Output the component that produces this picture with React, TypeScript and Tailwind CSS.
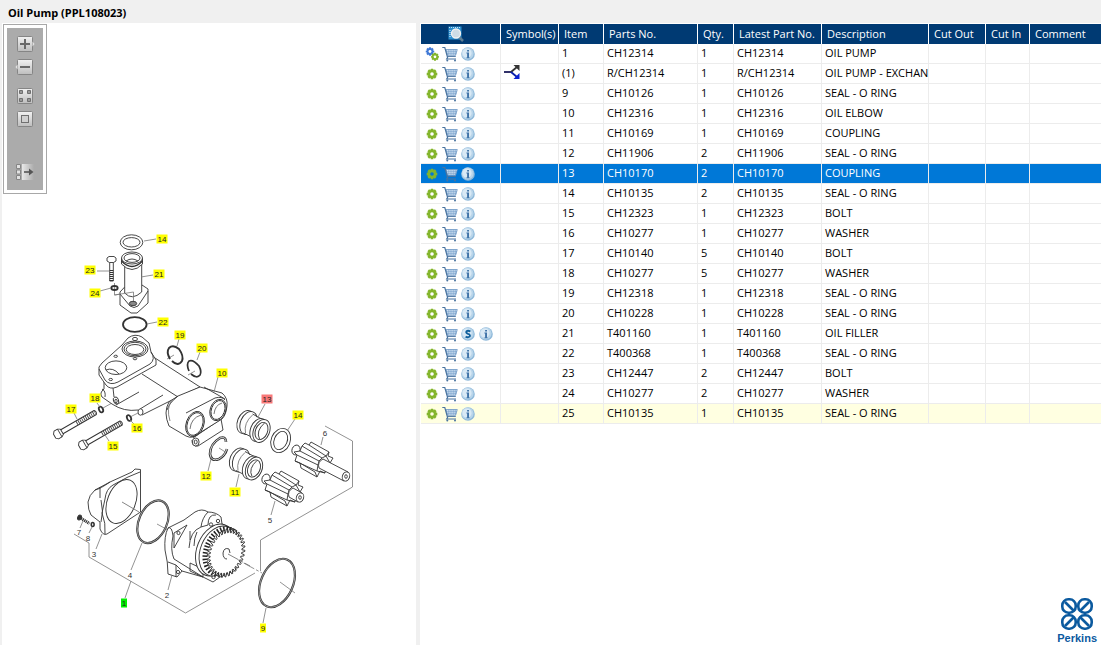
import { ReactNode, useState } from "react";

type Part = {
  item: string;
  no: string;
  qty: number;
  desc: string;
  assembly?: boolean;
  exchange?: boolean;
  service?: boolean;
};

const parts: Part[] = [
  { item: "1", no: "CH12314", qty: 1, desc: "OIL PUMP", assembly: true },
  { item: "(1)", no: "R/CH12314", qty: 1, desc: "OIL PUMP - EXCHAN", exchange: true },
  { item: "9", no: "CH10126", qty: 1, desc: "SEAL - O RING" },
  { item: "10", no: "CH12316", qty: 1, desc: "OIL ELBOW" },
  { item: "11", no: "CH10169", qty: 1, desc: "COUPLING" },
  { item: "12", no: "CH11906", qty: 2, desc: "SEAL - O RING" },
  { item: "13", no: "CH10170", qty: 2, desc: "COUPLING" },
  { item: "14", no: "CH10135", qty: 2, desc: "SEAL - O RING" },
  { item: "15", no: "CH12323", qty: 1, desc: "BOLT" },
  { item: "16", no: "CH10277", qty: 1, desc: "WASHER" },
  { item: "17", no: "CH10140", qty: 5, desc: "BOLT" },
  { item: "18", no: "CH10277", qty: 5, desc: "WASHER" },
  { item: "19", no: "CH12318", qty: 1, desc: "SEAL - O RING" },
  { item: "20", no: "CH10228", qty: 1, desc: "SEAL - O RING" },
  { item: "21", no: "T401160", qty: 1, desc: "OIL FILLER", service: true },
  { item: "22", no: "T400368", qty: 1, desc: "SEAL - O RING" },
  { item: "23", no: "CH12447", qty: 2, desc: "BOLT" },
  { item: "24", no: "CH10277", qty: 2, desc: "WASHER" },
  { item: "25", no: "CH10135", qty: 1, desc: "SEAL - O RING" },
];

const callouts: { n: string; x: number; y: number }[] = [
  { n: "14", x: 162, y: 239 },
  { n: "23", x: 90, y: 270 },
  { n: "21", x: 159, y: 274 },
  { n: "24", x: 95, y: 293 },
  { n: "22", x: 163, y: 322 },
  { n: "19", x: 180, y: 335 },
  { n: "20", x: 202, y: 348 },
  { n: "10", x: 222, y: 373 },
  { n: "18", x: 95, y: 398 },
  { n: "17", x: 71, y: 409 },
  { n: "16", x: 137, y: 428 },
  { n: "15", x: 113, y: 446 },
  { n: "13", x: 267, y: 399 },
  { n: "14", x: 298, y: 415 },
  { n: "12", x: 206, y: 476 },
  { n: "11", x: 235, y: 492 },
  { n: "9", x: 263, y: 628 },
  { n: "1", x: 124, y: 603 },
];

const plainLabels = [
  { n: "6", x: 325, y: 433 },
  { n: "5", x: 270, y: 520 },
  { n: "7", x: 79, y: 532 },
  { n: "8", x: 88, y: 538 },
  { n: "3", x: 94, y: 554 },
  { n: "4", x: 130, y: 575 },
  { n: "2", x: 167, y: 595 },
];

const columns = [
  { label: "Symbol(s)", width: "w-[58px]" },
  { label: "Item", width: "w-[45px]" },
  { label: "Parts No.", width: "w-[94px]" },
  { label: "Qty.", width: "w-[36px]" },
  { label: "Latest Part No.", width: "w-[88px]" },
  { label: "Description", width: "w-[107px]" },
  { label: "Cut Out", width: "w-[57px]" },
  { label: "Cut In", width: "w-[44px]" },
  { label: "Comment", width: "w-auto" },
];

function Cog({ x, y, color, hole, scale = 1 }: { x: number; y: number; color: string; hole: string; scale?: number }) {
  return (
    <g transform={`translate(${x} ${y}) scale(${scale})`}>
      {[0, 45, 90, 135].map((a) => (
        <rect key={a} x="-1.4" y="-5.3" width="2.8" height="10.6" rx="0.5" fill={color} transform={`rotate(${a})`} />
      ))}
      <circle r="4" fill={color} />
      <circle r="1.8" fill={hole} />
    </g>
  );
}

function PartIcon({ assembly, hole }: { assembly?: boolean; hole: string }) {
  return (
    <svg viewBox="0 0 16 16" className="h-4 w-4">
      {assembly ? (
        <>
          <Cog x={6} y={5.5} color="#4079d6" hole={hole} scale={0.8} />
          <Cog x={11} y={10.8} color="#84b52c" hole={hole} scale={0.75} />
        </>
      ) : (
        <Cog x={8} y={8} color="#84b52c" hole={hole} />
      )}
    </svg>
  );
}

function CartIcon() {
  return (
    <svg viewBox="0 0 16 16" className="h-4 w-4" fill="none" stroke="#49739f">
      <path d="M4 3.5H15.3L13.6 9.3H5.5Z" fill="#d9e8f6" stroke="#6f97c4" strokeWidth="0.8" />
      <path d="M4.5 5.3H15M5 7.3H14.4M6.8 3.5V9.3M9 3.5V9.3M11.2 3.5V9.3M13.2 3.5V9.3" stroke="#6d97c6" strokeWidth="0.6" />
      <path d="M0.3 1.5H2.8L5.6 11.5L4.7 13H14" strokeWidth="1.2" />
      <path d="M5.4 10.5H13.8" strokeWidth="0.9" />
      <circle cx="5.3" cy="14.4" r="1" fill="#49739f" stroke="none" />
      <circle cx="13" cy="14.4" r="1" fill="#49739f" stroke="none" />
    </svg>
  );
}

function Disc({ children }: { children: ReactNode }) {
  return (
    <svg viewBox="0 0 14 14" className="h-[14px] w-[14px]">
      <circle cx="7" cy="7" r="6.8" fill="#8fb9da" />
      <circle cx="6.6" cy="6.6" r="6" fill="#b9d5ea" />
      <circle cx="6" cy="6" r="4.6" fill="#d9e9f5" />
      {children}
    </svg>
  );
}

function RowActions({ part, hole }: { part: Part; hole: string }) {
  return (
    <div className="flex h-[19px] items-center gap-[2px] pl-[3px]">
      <button aria-label="Part details">
        <PartIcon assembly={part.assembly} hole={hole} />
      </button>
      <button aria-label="Add to cart">
        <CartIcon />
      </button>
      <div className="flex gap-1 pl-px">
        {part.service && (
          <button aria-label="Service">
            <Disc>
              <path d="M9.4 4.6Q7 3 5.4 4.4Q4.6 6 7 6.9Q9.6 7.8 8.8 9.4Q7 11 4.6 9.6" fill="none" stroke="#0f5f9c" strokeWidth="1.8" />
            </Disc>
          </button>
        )}
        <button aria-label="Information">
          <Disc>
            <path d="M6.1 2.9H8V4.5H6.1ZM5.4 5.6H8V10.4H8.7V11.2H5.4V10.4H6.1V6.4H5.4Z" fill="#3f73a8" />
          </Disc>
        </button>
      </div>
    </div>
  );
}

function ToolButton({ label, children }: { label: string; children: ReactNode }) {
  return (
    <button aria-label={label} className="h-4 w-5">
      <svg viewBox="0 0 20 16" className="h-4 w-5">
        <defs>
          <linearGradient id="face" x1="0" y1="0" x2="0" y2="1">
            <stop offset="0" stopColor="#f2f2f2" />
            <stop offset="1" stopColor="#bdbdbd" />
          </linearGradient>
          <linearGradient id="fade" x1="0" y1="0" x2="1" y2="0">
            <stop offset="0" stopColor="#e8e8e8" />
            <stop offset="1" stopColor="#ababab" />
          </linearGradient>
        </defs>
        {children}
      </svg>
    </button>
  );
}

const Face = () => <rect x="2.5" y="0.5" width="15" height="15" rx="1" fill="url(#face)" stroke="#858585" />;

function Toolbar() {
  return (
    <div className="mt-px ml-px w-11 border border-[#a8a8a8] bg-white p-[3px]">
      <div className="flex h-[162px] flex-col items-center bg-[#ababab] pt-2">
        <ToolButton label="Zoom in">
          <Face />
          <path d="M17.5 5.5L19.5 8L17.5 10.5Z" fill="#e4e4e4" />
          <path d="M10 3V13M5 8H15" stroke="#6a6a6a" strokeWidth="2" />
        </ToolButton>
        <div className="h-[7px]" />
        <ToolButton label="Zoom out">
          <Face />
          <path d="M2.5 5.5L0.5 8L2.5 10.5Z" fill="#e4e4e4" />
          <path d="M5 8H15" stroke="#6a6a6a" strokeWidth="2" />
        </ToolButton>
        <div className="h-[13px]" />
        <ToolButton label="Fit to window">
          <Face />
          <path d="M4.5 2.5h3v3h-3zM12.5 2.5h3v3h-3zM4.5 10.5h3v3h-3zM12.5 10.5h3v3h-3z" fill="#999" stroke="#6f6f6f" />
        </ToolButton>
        <div className="h-[7px]" />
        <ToolButton label="Actual size">
          <Face />
          <rect x="6.5" y="4.5" width="7" height="7" fill="#d0d0d0" stroke="#707070" />
        </ToolButton>
        <div className="h-[37px]" />
        <ToolButton label="Hide list">
          <rect x="7" y="0" width="12" height="16" fill="url(#fade)" />
          <path d="M1.5 0.5h4v4h-4zM1.5 6h4v4h-4zM1.5 11.5h4v4h-4z" fill="#e2e2e2" stroke="#858585" />
          <path d="M9 8H16" stroke="#555" strokeWidth="1.6" />
          <path d="M14 4.5L18.5 8L14 11.5Z" fill="#555" />
        </ToolButton>
      </div>
    </div>
  );
}

// drive gear: teeth are spread round a tilted ellipse
function gearOutline() {
  const pts: string[] = [];
  const count = 34;
  const tilt = (20 * Math.PI) / 180;
  for (let i = 0; i < count * 4; i++) {
    const a = (i / (count * 4)) * Math.PI * 2;
    const r = i % 4 < 2 ? 1 : 0.84;
    const px = Math.cos(a) * 18 * r;
    const py = Math.sin(a) * 25 * r;
    const x = 226 + px * Math.cos(tilt) - py * Math.sin(tilt);
    const y = 553 + px * Math.sin(tilt) + py * Math.cos(tilt);
    pts.push(`${x.toFixed(1)} ${y.toFixed(1)}`);
  }
  return "M" + pts.join("L") + "Z";
}

function Ring({ x, y, rx, ry, tilt = 0, gap = 2 }: { x: number; y: number; rx: number; ry: number; tilt?: number; gap?: number }) {
  return (
    <g transform={`translate(${x} ${y}) rotate(${tilt})`}>
      <ellipse rx={rx} ry={ry} />
      <ellipse rx={rx - gap} ry={ry - gap} />
    </g>
  );
}

function Bolt({ x, y, length }: { x: number; y: number; length: number }) {
  return (
    <g transform={`translate(${x} ${y}) rotate(-30)`}>
      <path d={`M4 -2.3H${length}Q${length + 2} 0 ${length} 2.3H4`} fill="#fff" />
      <path d={`M${length * 0.5} 0H${length}`} strokeWidth="4" strokeDasharray="0.9 1.2" stroke="#444" />
      <path d="M-4 -2L-2 -4.5H2L4.5 -3V3L2 4.5H-2L-4 2.5Z" fill="#fff" />
      <path d="M2 -4.5V4.5" />
    </g>
  );
}

function Spool({ x, y }: { x: number; y: number }) {
  return (
    <g transform={`translate(${x} ${y})`} fill="#fff">
      <ellipse cx="-16" cy="-9" rx="8" ry="12" transform="rotate(22 -16 -9)" />
      <ellipse cx="-13" cy="-8" rx="8" ry="12" transform="rotate(22 -13 -8)" />
      <path d="M-10 -17L3 -9L-4 11L-17 2Z" stroke="none" />
      <path d="M-9 -17L2 -11M-18 2L-6 8" />
      <path d="M-9 -16Q-18 -8 -16 2" fill="none" stroke="#777" />
      <ellipse cx="-3" cy="-1" rx="8" ry="12" transform="rotate(22 -3 -1)" />
      <ellipse rx="8" ry="12" transform="rotate(22)" />
      <ellipse rx="6" ry="9" transform="rotate(22)" />
      <path d="M3 -8Q-6 0 -2 8" fill="none" />
    </g>
  );
}

function Pinion({ x, y, shaft }: { x: number; y: number; shaft: number }) {
  return (
    <g transform={`translate(${x} ${y})`} fill="#fff">
      <ellipse cx="-16" cy="-10" rx="4" ry="5" transform="rotate(20 -16 -10)" />
      <path d="M-10 -14L-7 -17L-3 -15L-1 -18L17 -8L16 -4L21 -2L18 3L20 7L14 7L13 13L8 11L5 17L-11 8L-12 3L-17 1L-15 -5L-18 -8L-12 -9Z" />
      <path d="M-3 -15L14 -4L17 -8M-10 -14L10 -2L14 -4M-12 -9L7 1L10 -2M-15 -5L6 5L7 1M-17 1L5 11L6 5M-12 3L3 12L5 17M14 -4L18 3M5 11L13 13" fill="none" />
      <path d={`M11 -1L${12 + shaft} ${shaft / 2}L${8 + shaft} ${9 + shaft / 2}L7 8Q5 2 11 -1Z`} />
      <ellipse cx={10 + shaft} cy={4.5 + shaft / 2} rx="3.6" ry="4.7" transform={`rotate(22 ${10 + shaft} ${4.5 + shaft / 2})`} />
      <ellipse cx={10 + shaft} cy={4.5 + shaft / 2} rx="1.3" ry="1.8" />
    </g>
  );
}

function Diagram({ active }: { active: string }) {
  return (
    <svg viewBox="2 194 414 451" className="block w-full" role="img" aria-label="Exploded view of the oil pump">
      <g fill="none" stroke="#333" strokeWidth="0.9" strokeLinejoin="round">
        {/* frame of the pump assembly and centre lines */}
        <g stroke="#777" strokeWidth="0.8">
          <path d="M325 426L352.5 441V487L260.5 540V571M255 573L185.5 613L89 557V543L74 534" />
          <path d="M280 582L295 593M157 524L168 530M219 448L227 453M167 359L174 355M188 375L195 371M103 408L112 403M130 417L138 413" />
          <path d="M227 554L262 573" strokeDasharray="12 2 3 2" />
          <path d="M114.5 283V295L133.5 292V302" />
        </g>

        {/* filler tube */}
        <Ring x={131.5} y={242.3} rx={11.3} ry={7.5} gap={2.8} />
        <path d="M124.7 287L120 292V305L131 313H137L148 303V289L142 285" fill="#fff" />
        <path d="M120 294L130 306Q134 309 138 306L148 291" />
        <path d="M124.7 264V293Q132 301 141.7 292V264" fill="#fff" />
        <path d="M121.5 258V264Q132 275 142.5 264V258" fill="#fff" />
        <path d="M121.5 261Q132 272 142.5 261" strokeWidth="1.4" />
        <ellipse cx="132" cy="258" rx="10.5" ry="6" fill="#fff" />
        <ellipse cx="132" cy="258" rx="8" ry="4.4" />
        <path d="M126 261Q132 257 138 261" />
        <path d="M114.5 295L133.5 292V302" stroke="#777" strokeWidth="0.8" />
        <ellipse cx="133" cy="303.5" rx="3.7" ry="2.2" fill="#888" />
        <path d="M107 258L109 256.5H114L116 258V261L113.5 262.5H109.5L107 261ZM109.7 262.5V281H113.3V262.5" fill="#fff" />
        <path d="M111.5 270V282" strokeWidth="3.6" strokeDasharray="1 1" />
        <ellipse cx="114.5" cy="288" rx="3.2" ry="2" strokeWidth="1.8" />
        <ellipse cx="134.8" cy="324.5" rx="11.8" ry="7.3" strokeWidth="1.8" />
        <path d="M170 359Q166 352 169 348Q173 344 179 349Q184 356 182 361Q178 367 172 361" strokeWidth="1.9" />
        <path d="M189 371Q186 364 189 361Q193 359 199 366Q202 372 200 375Q197 379 191 374" strokeWidth="1.7" />

        {/* elbow body */}
        <path d="M104 382V389Q99 393 102 397L112 404Q124 412 138 410L142 415L178 397L200 387L155 358L110 370Z" fill="#fff" />
        <path d="M142 374L178 397M139 392L116 405M163 395L140 409M113 388L114 397M102 389Q106 391 105 397" />
        <path d="M122 345L128 338Q135 333 142 337L149 343L151 352L156 360V365L117 387Q110 390 106 385L99 375V367L102 363Z" fill="#fff" />
        <path d="M151 352Q156 359 150 364L118 382Q110 386 105 380L99 369" />
        <ellipse cx="135" cy="349" rx="13" ry="8" />
        <ellipse cx="135" cy="349" rx="11" ry="6.7" />
        <ellipse cx="135" cy="349.5" rx="8.8" ry="5" />
        <ellipse cx="116" cy="367.7" rx="10.8" ry="6.8" />
        <path d="M106 370Q113 367 119 374" />
        <ellipse cx="135" cy="339" rx="2.5" ry="1.6" />
        <ellipse cx="115.7" cy="356.3" rx="1.8" ry="1.1" />
        <ellipse cx="135" cy="358.7" rx="1.8" ry="1.1" />
        <ellipse cx="110.7" cy="379.5" rx="1.8" ry="1.1" />
        <ellipse cx="116" cy="400.5" rx="2.6" ry="3.6" transform="rotate(-20 116 400.5)" fill="#fff" />
        <ellipse cx="116" cy="401" rx="1.2" ry="1.8" />
        <ellipse cx="140.5" cy="412" rx="2.5" ry="3.2" fill="#fff" />
        <path d="M193 438L221 419L223 430L198 446Q192 447 192 440" fill="#fff" />
        <ellipse cx="195.7" cy="442" rx="3.4" ry="4" fill="#fff" />
        <ellipse cx="195.7" cy="442" rx="1.5" ry="2" />
        <path d="M200 387L222 393Q228 398 227 406Q226 415 222 419L193 437Q190 438 186 436L169 426Q163 412 169 402L178 396Z" fill="#fff" />
        <path d="M204 387L225 399M167 410Q169 403 178 396M186 413L215 398Q222 396 225 400" />
        <path d="M172 400Q166 408 170 421" stroke="#777" />
        <Ring x={195} y={424} rx={8.8} ry={13} tilt={20} gap={1.2} />
        <Ring x={218} y={410} rx={7.8} ry={11} tilt={20} gap={1.2} />
        <path d="M201 415Q191 418 190 429M222 403Q215 405 214 414" stroke="#666" />

        <Bolt x={58} y={434} length={43} />
        <Bolt x={83} y={445} length={44} />
        <ellipse cx="101" cy="409.5" rx="1.9" ry="3" strokeWidth="1.8" transform="rotate(-25 101 409.5)" />
        <ellipse cx="129" cy="418" rx="1.9" ry="3" strokeWidth="1.8" transform="rotate(-25 129 418)" />

        <path d="M226 442Q226 436 220 438Q210 444 210 454Q211 462 219 459Q225 456 227 449" strokeWidth="2.6" />
        <path d="M226 442Q226 436 220 438Q210 444 210 454Q211 462 219 459Q225 456 227 449" stroke="#fff" strokeWidth="0.8" />
        <Spool x={261.5} y={431} />
        <Spool x={254} y={468.5} />
        <Ring x={280.7} y={440.5} rx={9.5} ry={12.5} tilt={22} gap={3} />
        <Pinion x={312} y={460} shaft={24} />
        <Pinion x={282} y={489} shaft={8} />

        {/* end cover */}
        <path d="M140.5 469.5V512L107 534Q103 536 100 529L100 522L91 515Q88 510 88 502Q89 495 95 490L110 482L132 472L135 469Z" fill="#fff" />
        <path d="M140 472L128 477L113 485Q106 489 105 499L102 513Q106 523 105 534M100 487V498M95 490Q100 489 110 482M101 500Q104 512 101 522" />
        <ellipse cx="121.5" cy="501.5" rx="14" ry="23" transform="rotate(22 121.5 501.5)" fill="#fff" />
        <path d="M122 502L139 512" stroke="#777" />
        <path d="M81 518.3L89.500 523.5" strokeWidth="3" strokeDasharray="1.2 0.7" />
        <ellipse cx="79.5" cy="517.5" rx="1.8" ry="2.6" fill="#333" transform="rotate(25 79.5 517.5)" />
        <ellipse cx="92.7" cy="524.5" rx="1.4" ry="2" strokeWidth="1.6" />
        <ellipse cx="153" cy="521.7" rx="14" ry="22.5" transform="rotate(24 153 521.7)" strokeWidth="2.2" />
        <ellipse cx="153" cy="521.7" rx="14" ry="22.5" transform="rotate(24 153 521.7)" stroke="#ccc" strokeWidth="0.6" />

        {/* pump housing */}
        <path d="M168 528L184 520L195 512Q202 508 208 512Q216 512 221 517L222 524L236 530L236 570L220 577L213 582L203 577L182 571L177 577L168 574Q168 562 165 550Q164 536 168 528Z" fill="#fff" />
        <path d="M174 533L187 525L174 548ZM168 528Q172 526 173 536Q170 550 174 559L203 577M168 562L176 565V577M182 571L176 565M208 512Q202 518 201 527Q190 531 189 548M201 527L208 525Q208 514 216 515M190 531V540M197 532Q194 538 194 546M190 563V571L203 577V569Z" />
        <circle cx="178.5" cy="533" r="1.6" />
        <circle cx="178" cy="572" r="1.6" />
        <circle cx="211" cy="524.5" r="1.7" />
        <circle cx="218" cy="521" r="1.7" />
        <circle cx="213.5" cy="577" r="1.7" />
        <ellipse cx="215" cy="550" rx="18" ry="27" transform="rotate(22 215 550)" fill="#fff" />
        <ellipse cx="218" cy="551" rx="17.5" ry="26" transform="rotate(22 218 551)" fill="#fff" />
        <ellipse cx="222" cy="551.5" rx="16" ry="23.5" transform="rotate(20 222 551.5)" stroke="#222" strokeWidth="5" strokeDasharray="1.5 1.7" fill="#fff" />
        <path d={gearOutline()} fill="#fff" stroke="#222" />
        <path d="M229 549Q224 547 223 553Q223 559 227 559M229 549L230 553" />
        <path d="M228 554L250 566" stroke="#777" strokeDasharray="12 2 3 2" />
        <ellipse cx="277" cy="583" rx="16" ry="25.5" transform="rotate(24 277 583)" strokeWidth="2.2" />
        <ellipse cx="277" cy="583" rx="16" ry="25.5" transform="rotate(24 277 583)" stroke="#ccc" strokeWidth="0.6" />

        {/* leaders */}
        <path
          stroke="#777"
          strokeWidth="0.8"
          d="M144 241L156 239M97 271L109 271M141 277L153 275M100 291L111 288M147 324L157 322M179 339L177 346M200 352L197 360M218 377L214 392M97 403L100 407M74 413L77 419M134 424L130 420M109 441L105 435M265 404L258 417M295 419L287 431M323 437L321 445M208 471L211 459M236 487L239 474M271 515L275 501M142 543L131 570M172 575L168 590M131 581L125 598M102 534L96 549M266 608L263 623M80 528L83 521M89 533L92 527"
        />
      </g>
      <g fontFamily="'Liberation Sans', Arial, sans-serif" fontSize="8" textAnchor="middle">
        {callouts.map((c) => {
          const w = c.n.length > 1 ? 11 : 6;
          const fill = c.n === active ? "#f87878" : c.n === "1" ? "#00f000" : "#ffff00";
          return (
            <g key={c.n + "-" + c.x}>
              <rect x={c.x - w / 2} y={c.y - 4.5} width={w} height="9" fill={fill} />
              <text x={c.x} y={c.y + 3} fill="#222">{c.n}</text>
            </g>
          );
        })}
        {plainLabels.map((c) => (
          <text key={c.n} x={c.x} y={c.y + 3} fill="#333">{c.n}</text>
        ))}
      </g>
    </svg>
  );
}

function PerkinsLogo() {
  return (
    <div className="flex flex-col items-center gap-px text-[#0b5a9f]">
      <svg viewBox="0 0 34 34" className="h-[34px] w-[34px]" fill="none" stroke="currentColor" strokeWidth="2.6">
        {[0, 90, 180, 270].map((a) => (
          <g key={a} transform={`rotate(${a} 17 17)`}>
            <rect x="2.300" y="2.300" width="13.400" height="13.400" rx="6" />
            <path d="M5 5L14 14" />
          </g>
        ))}
      </svg>
      <span className="font-['Liberation_Sans',Arial,sans-serif] text-[11px] leading-3 font-bold">Perkins</span>
    </div>
  );
}

export default function App() {
  const [selected, setSelected] = useState(6);

  return (
    <div className="flex min-h-screen flex-col bg-[#f0f0f0] font-['Open_Sans','Noto_Sans',sans-serif] text-[11px] text-black">
      <h1 className="h-[23px] pt-1 pl-2 text-[11px] leading-[18px] font-bold">Oil Pump (PPL108023)</h1>
      <main className="grid flex-1 grid-cols-[416fr_681fr] gap-1">
        <section className="ml-[2px] bg-white">
          <Toolbar />
          <Diagram active={parts[selected].item} />
        </section>
        <section className="flex min-w-0 flex-col justify-between bg-white pt-px pl-px">
          <table className="w-full table-fixed border-separate border-spacing-0 text-left whitespace-nowrap">
            <thead>
              <tr className="h-5 bg-[#003a73] text-white">
                <th className="w-[80px] border-r border-white p-0">
                  <svg viewBox="0 0 16 16" className="ml-[27px] h-4 w-4" role="img" aria-label="Search parts">
                    <rect x="0.5" y="0.5" width="13" height="13" fill="#2c8fd0" />
                    <path d="M1 1.5H13" stroke="#bfe2f7" strokeDasharray="1 1" />
                    <path d="M2 4V12" stroke="#fff" strokeDasharray="1 1" />
                    <path d="M11 11L15 15" stroke="#5d7d94" strokeWidth="2.5" />
                    <circle cx="8" cy="7.5" r="4.5" fill="#cfdde6" stroke="#f2f2f2" strokeWidth="1.3" />
                  </svg>
                </th>
                {columns.map((c) => (
                  <th key={c.label} className={`${c.width} border-r border-white p-0 pl-[5px] align-top leading-[19px] font-normal last:border-r-0`}>
                    {c.label}
                  </th>
                ))}
              </tr>
            </thead>
            <tbody>
              {parts.map((p, i) => {
                const on = i === selected;
                const last = i === parts.length - 1;
                const row = on ? "bg-[#0078d7] text-white" : last ? "bg-[#ffffe1]" : "bg-white";
                const cell = "overflow-hidden border-r border-b border-[#ececec] p-0 pl-[3px] align-top leading-[18px] last:border-r-0";
                return (
                  <tr key={p.item} className={`h-5 ${row}`} onClick={() => setSelected(i)}>
                    <td className="border-r border-b border-[#ececec] p-0">
                      <RowActions part={p} hole={on ? "#0078d7" : last ? "#ffffe1" : "#fff"} />
                    </td>
                    <td className={cell}>
                      {p.exchange && (
                        <svg viewBox="0 0 16 16" className="h-4 w-4" role="img" aria-label="Exchange part">
                          <path d="M0 8H8" stroke="#1b1b5a" strokeWidth="1.8" />
                          <path d="M7 8L13 3" stroke="#333" strokeWidth="1.8" />
                          <path d="M7 8L13 13" stroke="#0a1fa8" strokeWidth="1.8" />
                          <path d="M9.5 1H15.500V7Z" fill="#333" />
                          <path d="M15.5 9V15H9.500Z" fill="#0a1fd0" />
                        </svg>
                      )}
                    </td>
                    <td className={cell}>{p.item}</td>
                    <td className={cell}>{p.no}</td>
                    <td className={cell}>{p.qty}</td>
                    <td className={cell}>{p.no}</td>
                    <td className={cell}>{p.desc}</td>
                    <td className={cell}></td>
                    <td className={cell}></td>
                    <td className={cell}></td>
                  </tr>
                );
              })}
            </tbody>
          </table>
          <div className="flex justify-end pr-1 pb-px">
            <PerkinsLogo />
          </div>
        </section>
      </main>
    </div>
  );
}
